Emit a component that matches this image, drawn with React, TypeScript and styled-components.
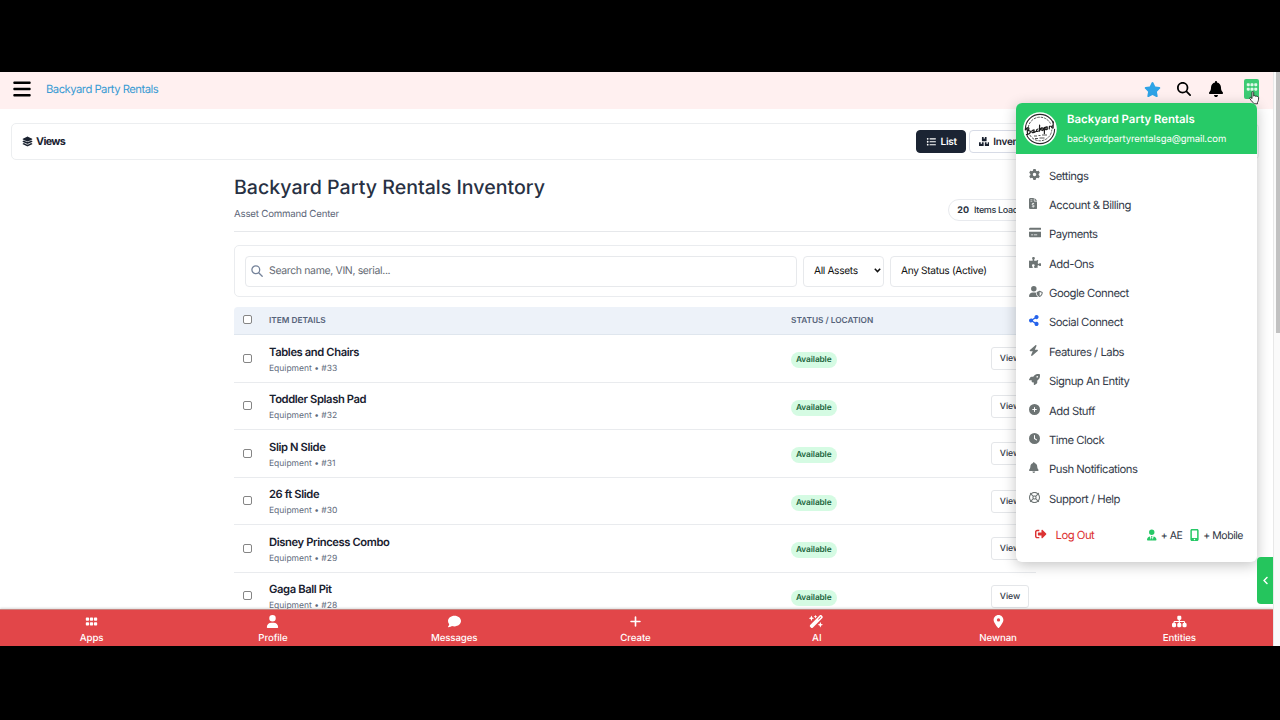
import { ReactNode } from 'react';
import styled, { createGlobalStyle, css } from 'styled-components';
import { FaBoxes, FaChevronLeft, FaPuzzlePiece, FaShareAlt, FaSignOutAlt } from 'react-icons/fa';
import {
  FaBars,
  FaBell,
  FaBolt,
  FaCirclePlus,
  FaClock,
  FaComment,
  FaCreditCard,
  FaFileInvoiceDollar,
  FaGear,
  FaGrip,
  FaLayerGroup,
  FaListUl,
  FaLocationDot,
  FaMagnifyingGlass,
  FaMobileScreenButton,
  FaPlus,
  FaRegLifeRing,
  FaRocket,
  FaSitemap,
  FaStar,
  FaUser,
  FaUserShield,
  FaUserTie,
  FaWandMagicSparkles,
} from 'react-icons/fa6';

interface InventoryItem {
  id: number;
  name: string;
}

interface MenuEntry {
  label: string;
  icon: ReactNode;
  iconWidth?: number;
  color?: string;
}

const items: InventoryItem[] = [
  { id: 33, name: 'Tables and Chairs' },
  { id: 32, name: 'Toddler Splash Pad' },
  { id: 31, name: 'Slip N Slide' },
  { id: 30, name: '26 ft Slide' },
  { id: 29, name: 'Disney Princess Combo' },
  { id: 28, name: 'Gaga Ball Pit' },
];

const menuEntries: MenuEntry[] = [
  { label: 'Settings', icon: <FaGear /> },
  { label: 'Account & Billing', icon: <FaFileInvoiceDollar />, iconWidth: 8.25 },
  { label: 'Payments', icon: <FaCreditCard />, iconWidth: 12.4 },
  { label: 'Add-Ons', icon: <FaPuzzlePiece />, iconWidth: 12.4 },
  { label: 'Google Connect', icon: <FaUserShield />, iconWidth: 13.75 },
  { label: 'Social Connect', icon: <FaShareAlt />, iconWidth: 9.6, color: '#2563eb' },
  { label: 'Features / Labs', icon: <FaBolt />, iconWidth: 9.6 },
  { label: 'Signup An Entity', icon: <FaRocket /> },
  { label: 'Add Stuff', icon: <FaCirclePlus /> },
  { label: 'Time Clock', icon: <FaClock /> },
  { label: 'Push Notifications', icon: <FaBell />, iconWidth: 9.6 },
  { label: 'Support / Help', icon: <FaRegLifeRing /> },
];

const tabs: MenuEntry[] = [
  { label: 'Apps', icon: <FaGrip /> },
  { label: 'Profile', icon: <FaUser /> },
  { label: 'Messages', icon: <FaComment /> },
  { label: 'Create', icon: <FaPlus /> },
  { label: 'AI', icon: <FaWandMagicSparkles />, iconWidth: 14.6 },
  { label: 'Newnan', icon: <FaLocationDot /> },
  { label: 'Entities', icon: <FaSitemap />, iconWidth: 14.6 },
];

const Logo = () => (
  <svg width="34" height="34" viewBox="0 0 34 34">
    <circle cx="17" cy="17" r="16.8" fill="#fff" />
    <circle cx="17" cy="17" r="14.6" fill="none" stroke="#2b2b2b" strokeWidth="1.1" />
    <circle cx="17" cy="17" r="11.8" fill="none" stroke="#555" strokeWidth="1" strokeDasharray="2.5 1" />
    <path d="M.8 18.500 32 10.500 33 16.500 2 24Z" fill="#fff" />
    <g
      transform="rotate(-13 17 17)"
      fill="none"
      stroke="#1c1c1c"
      strokeWidth="1.200"
      strokeLinecap="round"
      strokeLinejoin="round"
    >
      <path d="M2.500 14.500c3-2.500 5.500-1.500 2.500 1.500 3.500 0 2.500 4-2.500 3.500M4.500 14l-1 6M10.500 16.500c-2.500-.5-3 3-.5 2.500l1-2.500-.5 2.500 2-.5M15 16.500c-2.500 0-2.500 3 0 2.200M17.500 13l-1.500 6 1-2 2-.8-1.500 1.500 1.500 1.300M20 16.500l-.3 2.300 2-2.300-1.500 6M24 16.500c-2.500-.5-2.500 3-.5 2.500l1-2.500-.5 2.500M26 19l.8-2.500 1.200.2M30.500 16.500c-2 0-2.500 2.500-.5 2.500l1.500-6" />
    </g>
    <path d="M11 24h3M15.500 23.500h2M19 23h5M12 26.500h3M16.500 26h5" stroke="#555" strokeWidth="1" />
  </svg>
);

const Pointer = () => (
  <svg width="11" height="14" viewBox="0 0 11 14">
    <path
      d="M3 1.500c0-1.200 1.700-1.200 1.700 0v3.600c.4-.7 1.600-.5 1.700.2.500-.6 1.500-.3 1.600.4.700-.4 1.600 0 1.600.9 0 2.400-.2 3.400-1.100 4.700v1.500H4v-1.300C2.800 10.300 1.700 9 .8 7.500.4 6.500 1.500 6 2.200 6.800l.8.800z"
      fill="#fff"
      stroke="#222"
      strokeWidth=".9"
    />
  </svg>
);

const SearchIcon = () => (
  <svg width="12" height="12" viewBox="0 0 12 12" fill="none" stroke="#75839a" strokeWidth="1.300">
    <circle cx="4.800" cy="4.800" r="3.900" />
    <path d="M7.700 7.700 11.200 11.200" strokeLinecap="round" />
  </svg>
);

const Caret = () => (
  <svg width="7" height="5" viewBox="0 0 7 5" fill="none" stroke="#111" strokeWidth="1.500">
    <path d="M.8.800 3.500 3.600 6.200.8" />
  </svg>
);

const App = () => {
  return (
    <Screen>
      <GlobalStyle />
      <Page>
        <Main>
          <TopBar>
            <FaBars size={20} />
            <Brand>Backyard Party Rentals</Brand>
            <TopActions>
              <FaStar size={17} color="#2ea3e6" />
              <FaMagnifyingGlass size={14} />
              <FaBell size={16} />
              <AppsButton>
                <FaGrip size={12} />
                <PointerSlot>
                  <Pointer />
                </PointerSlot>
              </AppsButton>
            </TopActions>
          </TopBar>

          <ViewsBar>
            <FaLayerGroup size={11} />
            <ViewsTitle>Views</ViewsTitle>
            <ViewButton $active>
              <FaListUl />
              List
            </ViewButton>
            <ViewButton>
              <FaBoxes />
              Inventory Map
            </ViewButton>
          </ViewsBar>

          <Content>
            <Heading>
              <div>
                <Title>Backyard Party Rentals Inventory</Title>
                <Subtitle>Asset Command Center</Subtitle>
              </div>
              <Counter>
                <b>20</b> Items Loaded
              </Counter>
            </Heading>

            <Filters>
              <SearchField>
                <SearchIcon />
                Search name, VIN, serial...
              </SearchField>
              <Select $width={81}>
                All Assets
                <Caret />
              </Select>
              <Select $width={145}>
                Any Status (Active)
                <Caret />
              </Select>
            </Filters>

            <TableHead>
              <Checkbox />
              <HeadCell>ITEM DETAILS</HeadCell>
              <HeadCell>STATUS / LOCATION</HeadCell>
            </TableHead>
            {items.map((item) => (
              <TableRow key={item.id}>
                <Checkbox />
                <div>
                  <ItemName>{item.name}</ItemName>
                  <ItemMeta>Equipment • #{item.id}</ItemMeta>
                </div>
                <Status>Available</Status>
                <RowButton>View</RowButton>
              </TableRow>
            ))}
          </Content>

          <TabBar>
            {tabs.map((tab) => (
              <Tab key={tab.label} $iconWidth={tab.iconWidth}>
                {tab.icon}
                {tab.label}
              </Tab>
            ))}
          </TabBar>

          <AccountMenu>
            <MenuHeader>
              <Logo />
              <div>
                <AccountName>Backyard Party Rentals</AccountName>
                <AccountEmail>backyardpartyrentalsga@gmail.com</AccountEmail>
              </div>
            </MenuHeader>
            <MenuList>
              {menuEntries.map((entry) => (
                <MenuItem key={entry.label} $iconColor={entry.color} $iconWidth={entry.iconWidth}>
                  <MenuIcon>{entry.icon}</MenuIcon>
                  {entry.label}
                </MenuItem>
              ))}
            </MenuList>
            <MenuFooter>
              <LogOut>
                <FaSignOutAlt />
                Log Out
              </LogOut>
              <QuickAdd $iconWidth={9.5}>
                <FaUserTie />+ AE
              </QuickAdd>
              <QuickAdd $iconWidth={9}>
                <FaMobileScreenButton />+ Mobile
              </QuickAdd>
            </MenuFooter>
          </AccountMenu>

          <SideTab>
            <FaChevronLeft size={9} />
          </SideTab>
        </Main>
        <ScrollTrack>
          <ScrollThumb />
        </ScrollTrack>
      </Page>
    </Screen>
  );
};

const GlobalStyle = createGlobalStyle`
  * {
    box-sizing: border-box;
  }

  body {
    margin: 0;
    background: #000;
    font-family: Inter, 'Liberation Sans', sans-serif;
    text-rendering: geometricPrecision;
    overflow: hidden;
  }

  svg {
    flex-shrink: 0;
  }
`;

const Screen = styled.div`
  width: 1280px;
  height: 720px;
  padding: 72px 0 74px;
  background: #000;
`;

const Page = styled.div`
  display: flex;
  height: 574px;
  background: #fff;
  overflow: hidden;
`;

const Main = styled.main`
  position: relative;
  width: 1273px;
  height: 574px;
  overflow: hidden;
`;

const TopBar = styled.header`
  display: flex;
  align-items: center;
  height: 37px;
  padding: 0 14px 3px 12px;
  background: #fff0f0;
`;

const Brand = styled.span`
  margin-left: 14px;
  color: #3a9bd3;
  font-size: 11.3px;
  letter-spacing: -0.53px;
`;

const TopActions = styled.div`
  display: flex;
  align-items: center;
  gap: 17px;
  margin-left: auto;

  > svg:first-child {
    margin-right: -1px;
  }
`;

const AppsButton = styled.div`
  position: relative;
  display: flex;
  justify-content: center;
  align-items: center;
  width: 15px;
  height: 20px;
  margin-left: 3px;
  padding-bottom: 4px;
  border-radius: 2px;
  background: #3dcb74;
  color: #e0f9e9;
`;

const PointerSlot = styled.div`
  position: absolute;
  top: 12px;
  left: 5px;
  line-height: 0;
`;

const ViewsBar = styled.section`
  display: flex;
  align-items: center;
  height: 37px;
  margin: 14px 14px 0 11px;
  padding: 0 10px;
  border: 1px solid #eceef0;
  border-radius: 5px;
  color: #1a2230;
`;

const ViewsTitle = styled.strong`
  width: 880px;
  margin-left: 3px;
  font-size: 10.8px;
  letter-spacing: -0.65px;
`;

const ViewButton = styled.div<{ $active?: boolean }>`
  display: flex;
  align-items: center;
  gap: 4px;
  height: 23px;
  margin-right: 3px;
  padding: 0 9px;
  border: 1px solid #d7dbe6;
  border-radius: 4px;
  font-size: 10px;
  font-weight: 600;
  letter-spacing: -0.25px;
  white-space: nowrap;

  svg {
    width: 10.5px;
    height: 9.5px;
  }

  ${({ $active }) =>
    $active &&
    css`
      padding: 0 8px 0 9px;
      border-color: #1b2433;
      background: #1b2433;
      color: #fff;
    `}
`;

const Content = styled.section`
  width: 802px;
  margin-left: 234px;
`;

const Heading = styled.div`
  display: flex;
  justify-content: space-between;
  height: 72px;
  padding-top: 15px;
  border-bottom: 1px solid #e6e8eb;
`;

const Title = styled.h1`
  margin: 0;
  color: #283143;
  font-size: 19.6px;
  font-weight: 500;
  line-height: 24px;
`;

const Subtitle = styled.p`
  margin: 10px 0 0;
  color: #5d6678;
  font-size: 9.7px;
  letter-spacing: -0.2px;
  line-height: 12px;
`;

const Counter = styled.div`
  align-self: flex-start;
  height: 22px;
  margin-top: 24px;
  padding: 0 7px 0 8px;
  border: 1px solid #e8eaee;
  border-radius: 11px;
  color: #2c3442;
  font-size: 9px;
  font-weight: 500;
  letter-spacing: -0.36px;
  line-height: 21px;

  b {
    margin-right: 3px;
    letter-spacing: 0;
  }
`;

const Filters = styled.div`
  display: flex;
  gap: 6px;
  height: 52px;
  margin-top: 13px;
  padding: 10px;
  border: 1px solid #eaecef;
  border-radius: 5px;
`;

const field = css`
  display: flex;
  flex-shrink: 0;
  align-items: center;
  height: 31px;
  padding-bottom: 2px;
  border: 1px solid #e7e9ec;
  border-radius: 4px;
`;

const SearchField = styled.div`
  ${field}
  gap: 6px;
  width: 552px;
  padding-left: 5px;
  color: #666c75;
  font-size: 10.5px;
  letter-spacing: -0.36px;
`;

const Select = styled.div<{ $width: number }>`
  ${field}
  justify-content: space-between;
  width: ${({ $width }) => $width}px;
  padding-right: 2px;
  padding-left: 10px;
  color: #111;
  font-size: 10.2px;
  letter-spacing: -0.35px;
`;

const row = css`
  display: grid;
  grid-template-columns: 34px 522px 200px 38px;
  align-items: center;
  padding-left: 1px;
`;

const TableHead = styled.div`
  ${row}
  height: 28px;
  margin-top: 10px;
  padding-bottom: 2px;
  border-bottom: 1px solid #dfe6ee;
  border-radius: 4px 4px 0 0;
  background: #edf2f9;
  color: #56637a;
  font-size: 8.3px;
  font-weight: 600;
`;

const HeadCell = styled.span`
  padding-top: 2px;
`;

const TableRow = styled.div`
  ${row}
  height: 47.5px;
  border-bottom: 1px solid #e9ebee;
`;

const Checkbox = styled.span`
  width: 9px;
  height: 9px;
  margin-left: 8px;
  border: 1px solid #858585;
  border-radius: 2px;
  background: #fff;
`;

const ItemName = styled.div`
  margin-top: 3px;
  color: #19212f;
  font-size: 11.2px;
  font-weight: 600;
  letter-spacing: -0.38px;
  line-height: 15px;
`;

const ItemMeta = styled.div`
  margin-top: 3px;
  color: #5f6b7c;
  font-size: 8.5px;
  line-height: 12px;
`;

const Status = styled.span`
  justify-self: start;
  height: 16px;
  margin-top: 4px;
  padding: 0 5px;
  border-radius: 8px;
  background: #d5fbe3;
  color: #1b653b;
  font-size: 8.3px;
  font-weight: 600;
  letter-spacing: -0.1px;
  line-height: 16px;
`;

const RowButton = styled.div`
  height: 23px;
  margin-top: 1px;
  border: 1px solid #e4e6e9;
  border-radius: 3px;
  color: #333b49;
  font-size: 8.7px;
  font-weight: 500;
  line-height: 22px;
  text-align: center;
`;

const TabBar = styled.nav`
  position: absolute;
  right: 0;
  bottom: 0;
  left: 0;
  display: flex;
  height: 37px;
  padding: 0 3px 0 1px;
  border-top: 1px solid #c9837f;
  background: #e24649;
  box-shadow: 0 -1px 2px rgba(0, 0, 0, 0.15);
`;

const Tab = styled.div<{ $iconWidth?: number }>`
  display: flex;
  flex: 1;
  flex-direction: column;
  align-items: center;
  gap: 4px;
  padding-top: 5px;
  color: #fff;
  font-size: 9.7px;
  font-weight: 500;
  letter-spacing: -0.1px;
  line-height: 13px;

  svg {
    width: ${({ $iconWidth }) => $iconWidth ?? 13}px;
    height: 13px;
  }
`;

const AccountMenu = styled.aside`
  position: absolute;
  top: 31px;
  left: 1016px;
  width: 241px;
  height: 459px;
  border-radius: 6px;
  background: #fff;
  box-shadow: 0 3px 14px rgba(0, 0, 0, 0.24);
  overflow: hidden;
`;

const MenuHeader = styled.div`
  display: flex;
  gap: 10px;
  height: 51px;
  padding: 9px 7px;
  background: #27ca67;
  color: #fff;
`;

const AccountName = styled.div`
  font-size: 11.4px;
  font-weight: 600;
  line-height: 14px;
`;

const AccountEmail = styled.div`
  margin-top: 7px;
  font-size: 9.5px;
  letter-spacing: -0.1px;
  line-height: 13px;
`;

const MenuList = styled.div`
  padding: 7px 12px 0;
`;

const MenuItem = styled.div<{ $iconColor?: string; $iconWidth?: number }>`
  display: flex;
  align-items: center;
  height: 29.37px;
  color: #343b49;
  font-size: 11.3px;
  letter-spacing: -0.48px;

  svg {
    width: ${({ $iconWidth }) => $iconWidth ?? 11}px;
    height: 11px;
    color: ${({ $iconColor }) => $iconColor ?? '#6d7474'};
  }
`;

const MenuIcon = styled.span`
  display: flex;
  align-items: center;
  flex-shrink: 0;
  width: 21px;
  padding: 0 0 3px 1px;
`;

const MenuFooter = styled.div`
  display: flex;
  align-items: center;
  gap: 8px;
  height: 30px;
  margin-top: 7px;
  padding: 0 14px 0 19px;
`;

const LogOut = styled.div`
  display: flex;
  align-items: center;
  gap: 9px;
  margin-right: auto;
  color: #dc3232;
  font-size: 11.3px;
  letter-spacing: -0.5px;

  svg {
    width: 11.5px;
    height: 12px;
    margin-bottom: 2px;
  }
`;

const QuickAdd = styled.div<{ $iconWidth: number }>`
  display: flex;
  align-items: center;
  gap: 4px;
  color: #2e3542;
  font-size: 10.5px;
  letter-spacing: -0.45px;

  svg {
    width: ${({ $iconWidth }) => $iconWidth}px;
    height: 12px;
    color: #27c867;
  }
`;

const SideTab = styled.div`
  position: absolute;
  top: 485px;
  right: 0;
  display: flex;
  justify-content: center;
  align-items: center;
  width: 16px;
  height: 47px;
  border-radius: 4px 0 0 4px;
  background: #25c55d;
  color: #fff;
`;

const ScrollTrack = styled.div`
  flex: 1;
  border-left: 1px solid #e8e8e8;
  background: #fafafa;
`;

const ScrollThumb = styled.div`
  height: 261px;
  margin-left: 2px;
  background: #c1c1c1;
`;

export default App;
